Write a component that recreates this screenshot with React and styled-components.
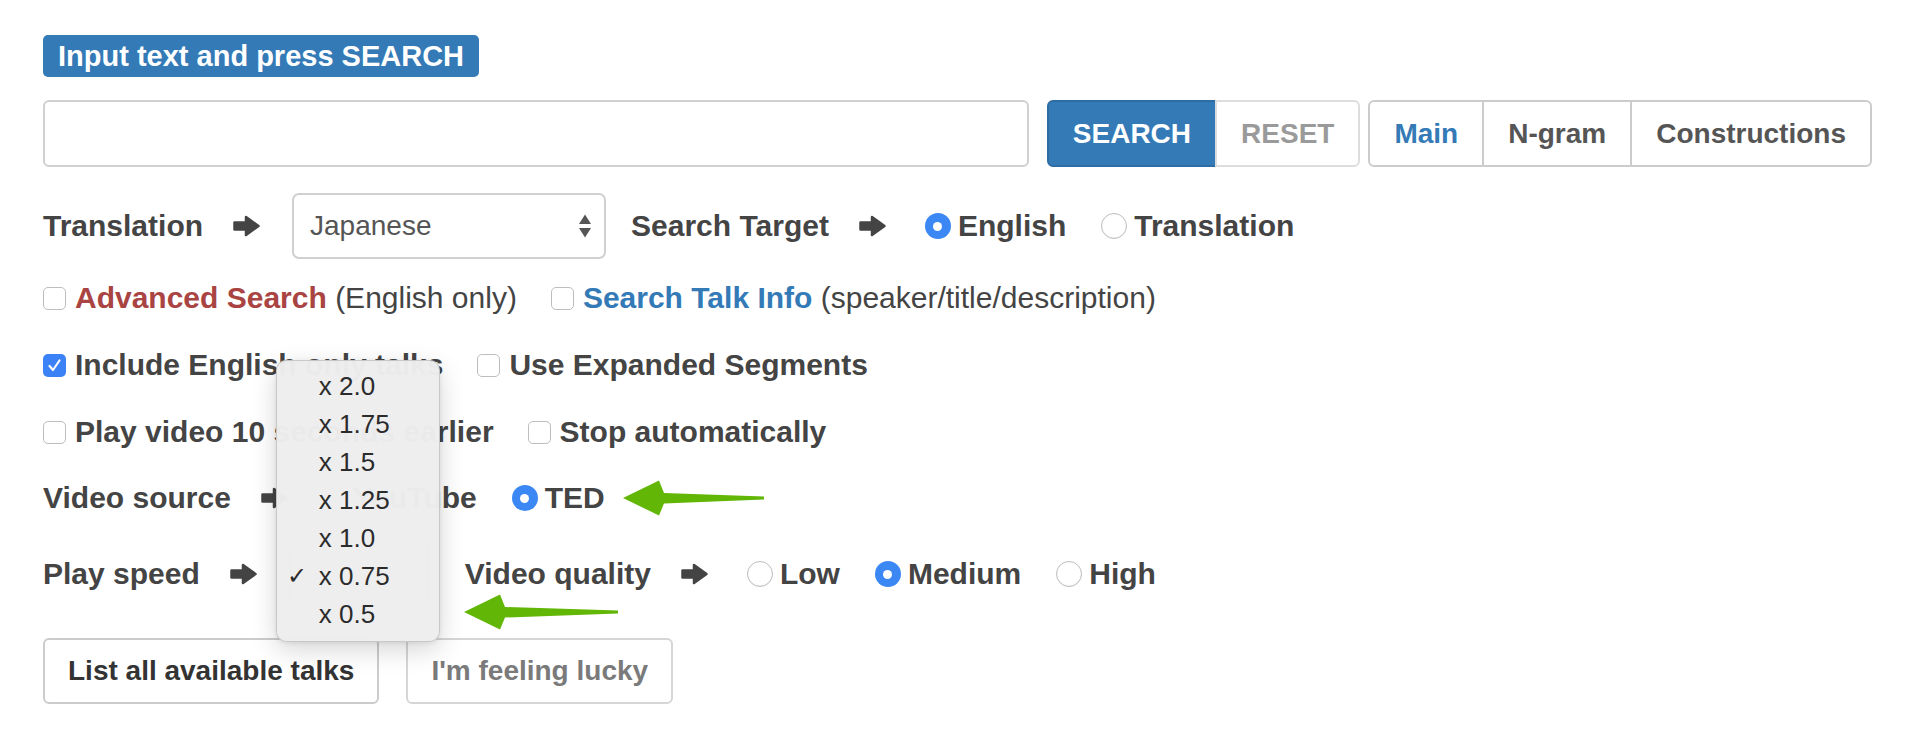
import React from "react";
import styled, { createGlobalStyle } from "styled-components";

const GlobalStyle = createGlobalStyle`
  body {
    margin: 0;
    background: #fff;
    font-family: "Liberation Sans", Arial, Helvetica, sans-serif;
    color: #444;
  }
`;

const Page = styled.div`
  display: flex;
  flex-direction: column;
  align-items: flex-start;
  padding: 35px 40px 0 43px;
`;

const Badge = styled.span`
  display: inline-block;
  background: #337ab7;
  color: #fff;
  font-weight: bold;
  font-size: 29px;
  line-height: 42px;
  padding: 0 15px;
  border-radius: 5px;
`;

const SearchRow = styled.div`
  display: flex;
  align-self: stretch;
  margin-top: 23px;
  height: 67px;
`;

const SearchInput = styled.input`
  flex: 1;
  box-sizing: border-box;
  height: 67px;
  margin: 0 18px 0 0;
  padding: 0 16px;
  border: 2px solid #d0d0d0;
  border-radius: 6px;
  font-size: 28px;
  font-family: inherit;
  outline: none;
`;

const BtnGroup = styled.div`
  display: flex;
  margin-right: ${(p) => p.$gap || 0}px;
`;

const btnColors = {
  primary: { bg: "#337ab7", border: "#2e6da4", color: "#fff" },
  muted: { bg: "#fff", border: "#ddd", color: "#9a9a9a" },
  nav: { bg: "#fff", border: "#ccc", color: "#555" },
  active: { bg: "#fff", border: "#ccc", color: "#337ab7" },
};

const Btn = styled.button`
  box-sizing: border-box;
  height: 67px;
  padding: 0 24px;
  margin: 0;
  font-family: inherit;
  font-size: 28px;
  font-weight: bold;
  background: ${(p) => btnColors[p.$kind].bg};
  color: ${(p) => btnColors[p.$kind].color};
  border: 2px solid ${(p) => btnColors[p.$kind].border};
  border-radius: 0;
  & + & {
    margin-left: -2px;
  }
  &:first-child {
    border-radius: 6px 0 0 6px;
  }
  &:last-child {
    border-radius: 0 6px 6px 0;
  }
`;

const Row = styled.div`
  display: flex;
  align-items: center;
  position: relative;
  height: ${(p) => p.$h}px;
  margin-top: ${(p) => p.$mt}px;
  font-size: 30px;
  font-weight: bold;
  white-space: nowrap;
`;

const Label = styled.span`
  color: #444;
`;

const ArrowSvg = styled.svg`
  flex: none;
  width: 29px;
  height: 22px;
  margin: 0 ${(p) => p.$mr ?? 31}px 0 29px;
`;

const Arrow = ({ mr }) => (
  <ArrowSvg viewBox="0 0 29 22" $mr={mr}>
    <path
      d="M2.5 7.5 H14 V2 L26.5 11 L14 20 V14.5 H2.5 Z"
      fill="#444"
      stroke="#444"
      strokeWidth="2.5"
      strokeLinejoin="round"
    />
  </ArrowSvg>
);

const SelectBox = styled.div`
  box-sizing: border-box;
  display: flex;
  align-items: center;
  justify-content: space-between;
  width: ${(p) => p.$w}px;
  height: 66px;
  margin-right: ${(p) => p.$mr ?? 25}px;
  padding: 0 12px 0 16px;
  border: 2px solid #d0d0d0;
  border-radius: 7px;
  background: #fff;
  font-size: 28px;
  font-weight: normal;
  color: #555;
`;

const SelectArrows = () => (
  <svg width="14" height="28" viewBox="0 0 14 28">
    <path d="M1 12 L7 2.5 L13 12 Z" fill="#555" />
    <path d="M1 16 L7 25.5 L13 16 Z" fill="#555" />
  </svg>
);

const Option = styled.label`
  display: flex;
  align-items: center;
  margin-left: ${(p) => p.$ml ?? 0}px;
  color: #444;
`;

const RadioDot = styled.span`
  box-sizing: border-box;
  flex: none;
  width: 26px;
  height: 26px;
  margin-right: 7px;
  border-radius: 50%;
  display: flex;
  align-items: center;
  justify-content: center;
  background: ${(p) => (p.$on ? "#3b88f5" : "#fff")};
  border: ${(p) => (p.$on ? "none" : "1.5px solid #bdbdbd")};
  box-shadow: ${(p) => (p.$on ? "none" : "inset 0 -1px 1px rgba(0,0,0,0.05)")};
  &::after {
    content: "";
    display: ${(p) => (p.$on ? "block" : "none")};
    width: 9px;
    height: 9px;
    border-radius: 50%;
    background: #fff;
  }
`;

const Radio = ({ on, ml, children }) => (
  <Option $ml={ml}>
    <RadioDot $on={on} />
    {children}
  </Option>
);

const CheckBox = styled.span`
  box-sizing: border-box;
  flex: none;
  width: 23px;
  height: 23px;
  margin-right: 9px;
  border-radius: 5px;
  display: flex;
  align-items: center;
  justify-content: center;
  background: ${(p) => (p.$on ? "#3b82f6" : "#fff")};
  border: ${(p) => (p.$on ? "none" : "1.5px solid #bdbdbd")};
`;

const Check = ({ on, ml, children }) => (
  <Option $ml={ml}>
    <CheckBox $on={on}>
      {on && (
        <svg width="15" height="15" viewBox="0 0 15 15">
          <path
            d="M2.5 8 L6 12 L12.5 2.5"
            fill="none"
            stroke="#fff"
            strokeWidth="2.2"
            strokeLinecap="round"
            strokeLinejoin="round"
          />
        </svg>
      )}
    </CheckBox>
    <span>{children}</span>
  </Option>
);

const Accent = styled.span`
  color: ${(p) => p.$color};
`;

const Plain = styled.span`
  font-weight: normal;
  color: #444;
`;

const SpeedWrap = styled.div`
  position: relative;
  display: flex;
`;

const Menu = styled.ul`
  position: absolute;
  left: -13px;
  top: -181px;
  z-index: 5;
  box-sizing: border-box;
  width: 164px;
  margin: 0;
  padding: 6px 0 8px;
  list-style: none;
  background: rgba(238, 238, 239, 0.98);
  border: 1px solid rgba(0, 0, 0, 0.16);
  border-radius: 10px;
  box-shadow: 0 8px 26px rgba(0, 0, 0, 0.16), 0 1px 4px rgba(0, 0, 0, 0.08);
`;

const MenuItem = styled.li`
  display: flex;
  align-items: center;
  height: 38px;
  font-size: 26px;
  font-weight: normal;
  color: #2b2b2b;
`;

const Tick = styled.span`
  width: 42px;
  padding-left: 10px;
  box-sizing: border-box;
  font-size: 24px;
`;

const GreenArrow = styled.svg`
  position: absolute;
  left: ${(p) => p.$x}px;
  top: ${(p) => p.$y}px;
  width: ${(p) => p.$w}px;
  height: 38px;
  z-index: 6;
`;

const Pointer = ({ x, y, w }) => (
  <GreenArrow $x={x} $y={y} $w={w} viewBox={`0 0 ${w} 38`}>
    <path
      d={`M1 19 L37 1.5 L42 14 L${w - 2} 17.5 L${w - 2} 20.5 L42 24.5 L37 36.5 Z`}
      fill="#62b606"
    />
  </GreenArrow>
);

const Actions = styled.div`
  display: flex;
  gap: 27px;
  margin-top: 31px;
`;

const PlainBtn = styled.button`
  box-sizing: border-box;
  height: 66px;
  padding: 0 23px;
  font-family: inherit;
  font-size: 28px;
  font-weight: bold;
  background: #fff;
  color: ${(p) => (p.$dim ? "#7a7a7a" : "#333")};
  border: 2px solid ${(p) => (p.$dim ? "#d6d6d6" : "#ccc")};
  border-radius: 6px;
`;

const speeds = ["x 2.0", "x 1.75", "x 1.5", "x 1.25", "x 1.0", "x 0.75", "x 0.5"];

export default function App() {
  return (
    <>
      <GlobalStyle />
      <Page>
        <Badge>Input text and press SEARCH</Badge>

        <SearchRow>
          <SearchInput type="text" />
          <BtnGroup $gap={8}>
            <Btn $kind="primary">SEARCH</Btn>
            <Btn $kind="muted">RESET</Btn>
          </BtnGroup>
          <BtnGroup>
            <Btn $kind="active">Main</Btn>
            <Btn $kind="nav">N-gram</Btn>
            <Btn $kind="nav">Constructions</Btn>
          </BtnGroup>
        </SearchRow>

        <Row $h={66} $mt={26}>
          <Label>Translation</Label>
          <Arrow />
          <SelectBox $w={314}>
            <span>Japanese</span>
            <SelectArrows />
          </SelectBox>
          <Label>Search Target</Label>
          <Arrow />
          <Radio on ml={7}>English</Radio>
          <Radio ml={35}>Translation</Radio>
        </Row>

        <Row $h={40} $mt={19}>
          <Check>
            <Accent $color="#a94442">Advanced Search</Accent>{" "}
            <Plain>(English only)</Plain>
          </Check>
          <Check ml={34}>
            <Accent $color="#337ab7">Search Talk Info</Accent>{" "}
            <Plain>(speaker/title/description)</Plain>
          </Check>
        </Row>

        <Row $h={40} $mt={27}>
          <Check on>Include English only talks</Check>
          <Check ml={34}>Use Expanded Segments</Check>
        </Row>

        <Row $h={40} $mt={27}>
          <Check>Play video 10 seconds earlier</Check>
          <Check ml={34}>Stop automatically</Check>
        </Row>

        <Row $h={40} $mt={26}>
          <Label>Video source</Label>
          <Arrow />
          <Radio ml={0}>YouTube</Radio>
          <Radio on ml={35}>TED</Radio>
          <Pointer x={579} y={1} w={144} />
        </Row>

        <Row $h={66} $mt={23}>
          <Label>Play speed</Label>
          <Arrow />
          <SpeedWrap>
            <SelectBox $w={140} $mr={36} />
            <Menu>
              {speeds.map((s) => (
                <MenuItem key={s}>
                  <Tick>{s === "x 0.75" ? "✓" : ""}</Tick>
                  {s}
                </MenuItem>
              ))}
            </Menu>
          </SpeedWrap>
          <Label>Video quality</Label>
          <Arrow />
          <Radio ml={7}>Low</Radio>
          <Radio on ml={35}>Medium</Radio>
          <Radio ml={35}>High</Radio>
          <Pointer x={420} y={52} w={157} />
        </Row>

        <Actions>
          <PlainBtn>List all available talks</PlainBtn>
          <PlainBtn $dim>I'm feeling lucky</PlainBtn>
        </Actions>
      </Page>
    </>
  );
}
